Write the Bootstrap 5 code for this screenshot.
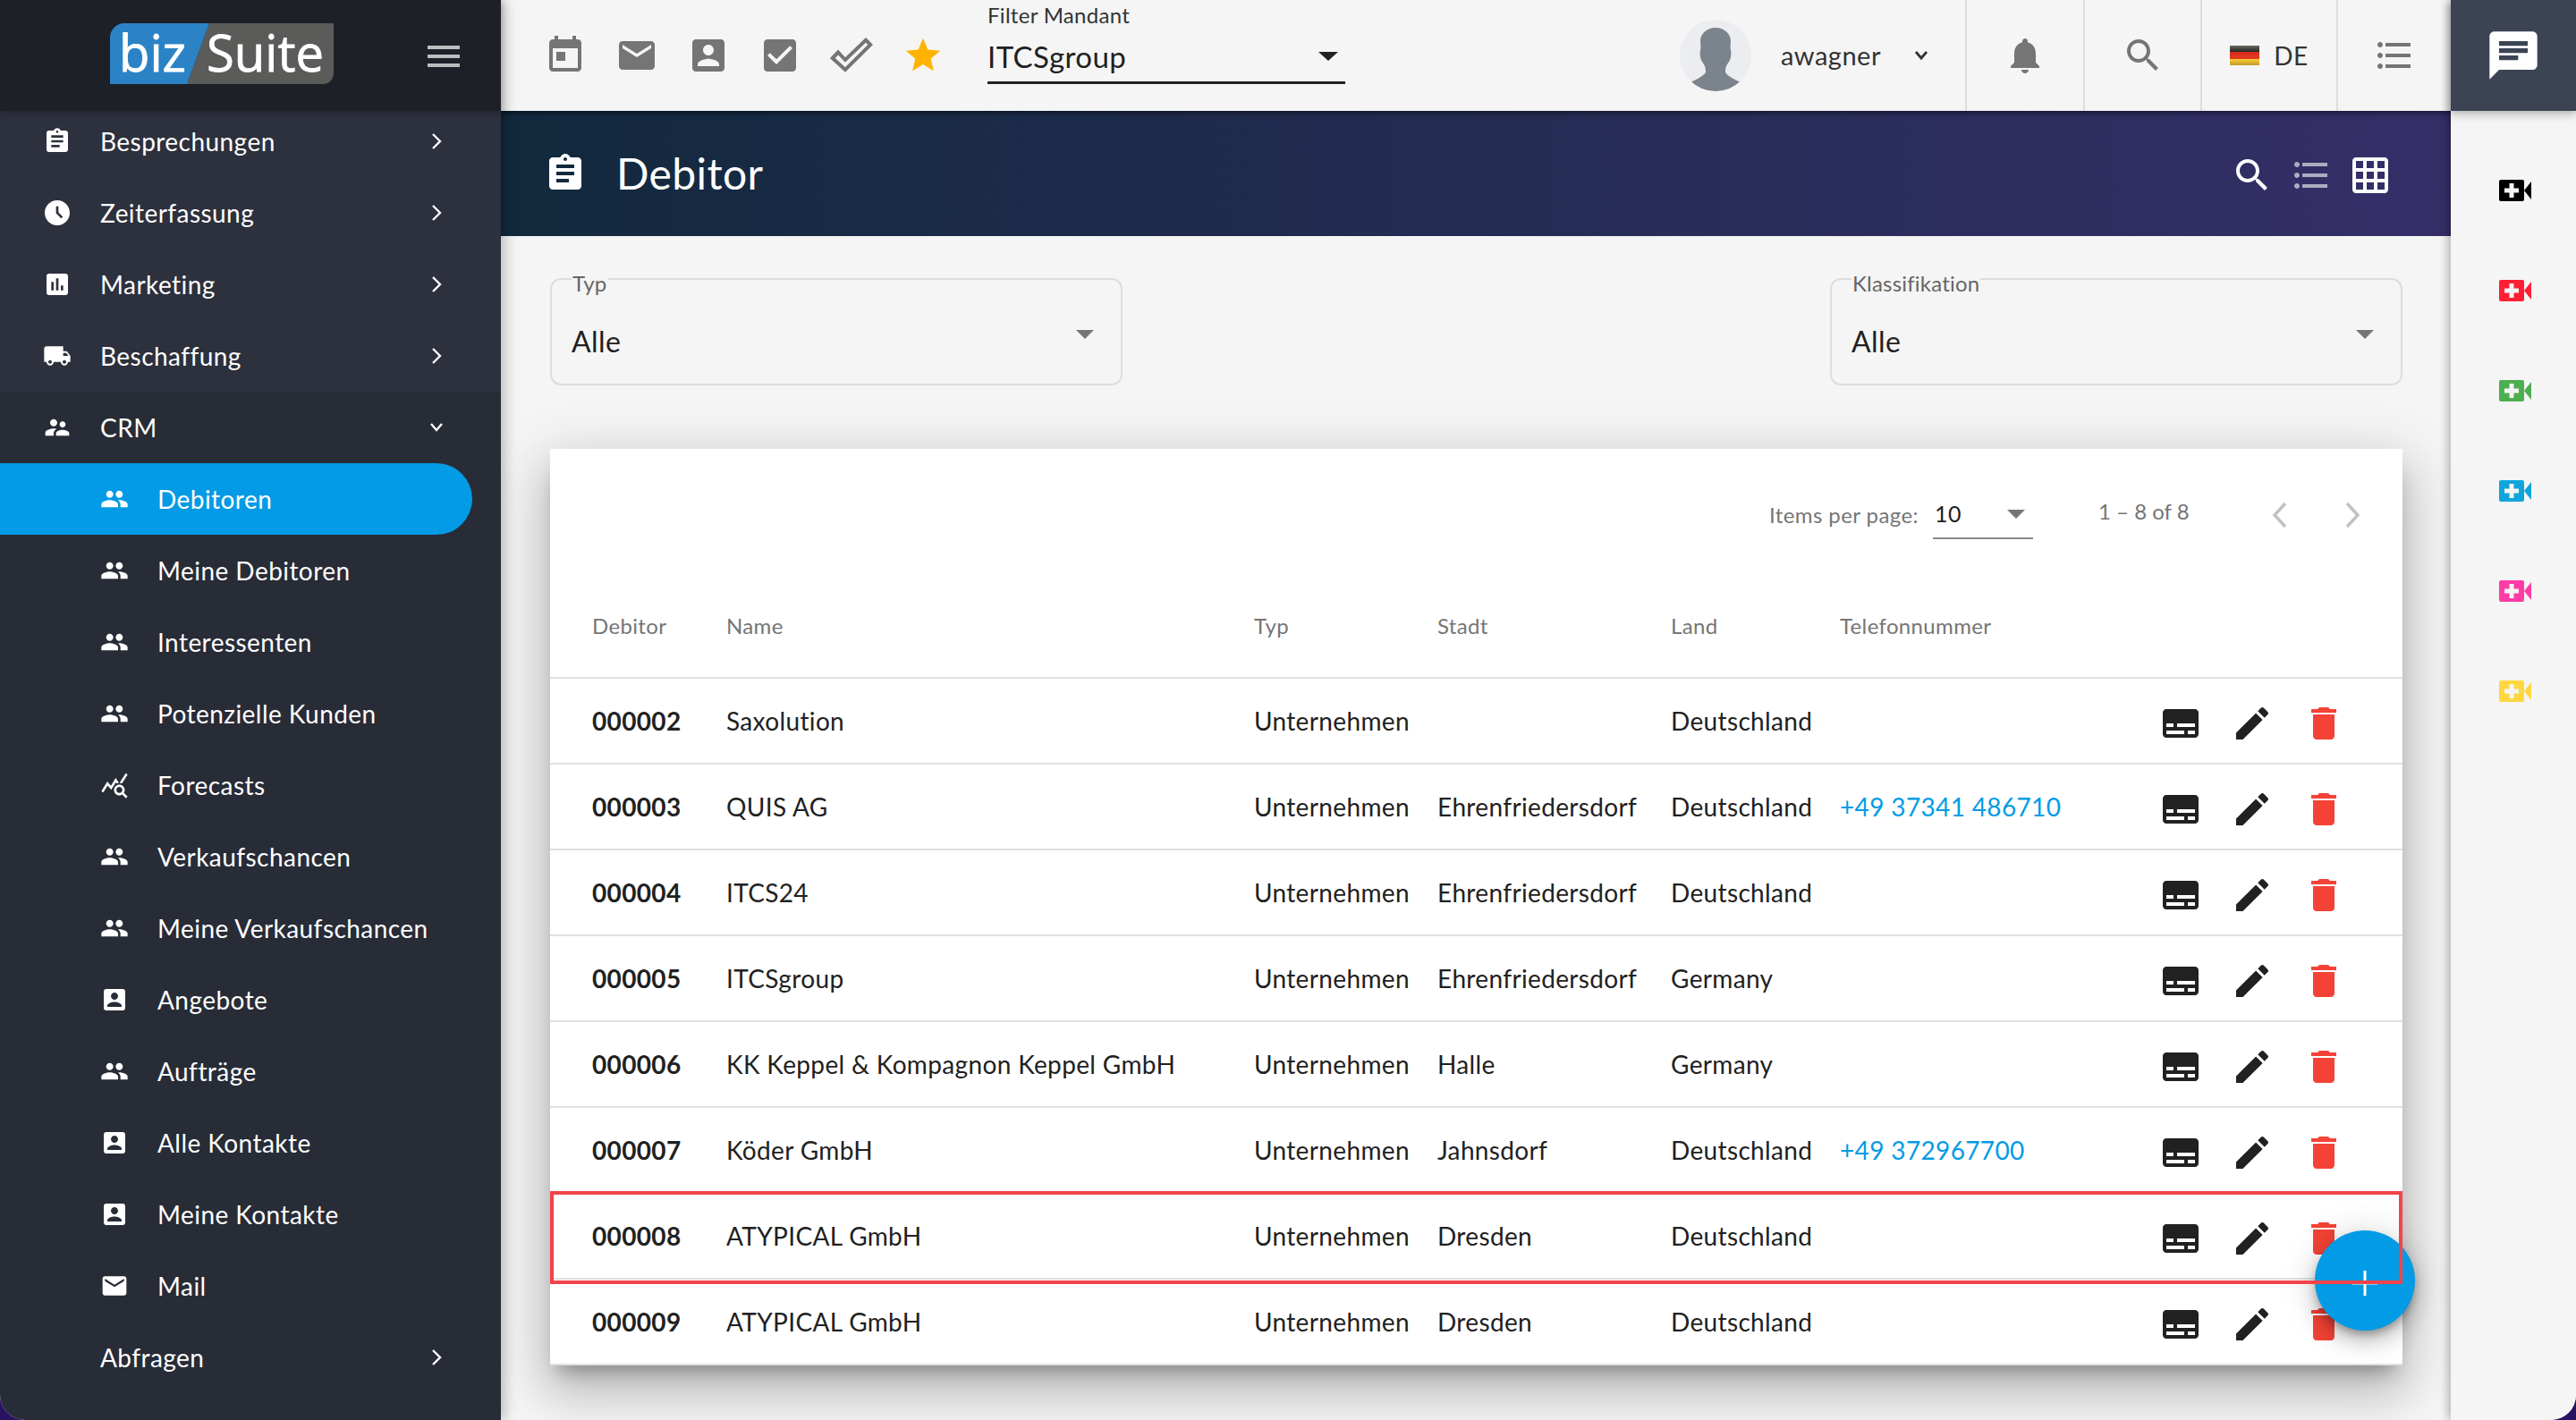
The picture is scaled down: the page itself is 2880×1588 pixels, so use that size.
<!DOCTYPE html>
<html lang="de">
<head>
<meta charset="utf-8">
<title>bizSuite Debitor</title>
<link href="https://cdn.jsdelivr.net/npm/bootstrap@5.3.0/dist/css/bootstrap.min.css" rel="stylesheet">
<style>
html,body{height:100%;margin:0}
body{background:#2a1263;font-family:"Lato","Liberation Sans",sans-serif;font-size:28px;color:#212121;letter-spacing:.45px;overflow:hidden}
svg{display:block;flex:none;fill:currentColor}
.sprite-defs{position:absolute}
.app-shell{width:2880px;height:1588px;background:#f5f5f5;border-radius:0 0 28px 28px;overflow:hidden;position:relative}
.side-bar{width:560px;background:#282c37;color:#fff;box-shadow:4px 0 14px rgba(0,0,0,.25);z-index:3}
.side-brand{height:124px;background:#1e2028;padding:26px 46px 0 123px;z-index:2;position:relative;box-shadow:0 2px 8px rgba(0,0,0,.25)}
.brand-logo{overflow:visible}
.brand-logo text{font-family:"Open Sans",sans-serif;font-size:57px;letter-spacing:0;fill:#fff;stroke:#fff;stroke-width:.8}
.side-burger{color:#bdbdbf;margin-top:25px}
.side-nav{margin-top:-6px;overflow:hidden;flex:1 1 0;min-height:0}
.top-group{background:#2d303d}
.nav-row{height:80px;padding-left:46px;padding-right:64px;flex:none}
.nav-row .ico{width:36px;display:flex;justify-content:center;margin-right:30px}
.nav-row .ico svg{width:32px;height:32px}
.nav-sub{padding-left:110px}
.nav-plain{padding-left:112px}
.nav-active{background:#039be5;border-radius:0 40px 40px 0;width:528px;padding-right:0}
.nav-chev{width:16px;height:24px;fill:none;stroke:#fff;stroke-width:2.4}
.main-col{min-width:0}
.top-strip{height:124px;background:#f5f5f5;color:#757575}
.top-tools{padding-left:32px}
.top-ico{width:48px;height:48px}
.tool-slot{width:80px;justify-content:center}
.star-ico{color:#ffb300}
.mandant{width:400px;margin-left:32px;height:124px}
.mandant-label{font-size:24px;line-height:34px;height:35px;color:#333;letter-spacing:.3px}
.mandant-value{font-size:33px;line-height:56px;height:59px;border-bottom:3px solid #222;color:#212121}
.tri-down{width:0;height:0;border-left:11px solid transparent;border-right:11px solid transparent;border-top:10px solid #222}
.avatar-pic{width:80px;height:80px;margin-left:374px;margin-right:33px}
.user-name{color:#333;width:117px;font-size:29px;letter-spacing:.5px}
.user-chev{stroke:#333;stroke-width:2.8;margin-left:32px}
.divider-l{border-left:2px solid #ddd;height:124px}
.slot-bell{width:132px}.slot-search{width:131px}.slot-lang{width:152px;color:#333}.slot-list{width:128px}
.flag-de{width:33px;height:22px;background:linear-gradient(#6a6a60,#222 33%,#d92a1c 33%,#e03a20 66%,#ffd030 66%,#c09a30)}
.head-band{height:140px;background:linear-gradient(90deg,#12293d,#352f69);box-shadow:inset 0 5px 6px -3px rgba(0,0,0,.55);color:#fff;padding:0 66px 0 48px}
.head-title{font-size:48px;font-weight:400;margin:0 0 0 33px;line-height:1;letter-spacing:.4px}
.head-tools{gap:18px;padding-top:4px}
.list-dim{opacity:.6}
.page-body{flex:1 1 0;padding:26px 54px 0 55px;background:#f5f5f5;position:relative;min-height:0}
.pick-box{width:640px;height:141px;border:2px solid #ddd;border-radius:12px;padding:0 22px;margin:0;min-width:0}
.pick-box legend{float:none;width:auto;font-size:24px;line-height:34px;color:#666;padding:10px 1px 0;margin:0;letter-spacing:.2px}
.pick-value{height:96px;font-size:32px;color:#212121;padding-right:8px}
.tri-soft{border-top-color:#757575;border-left-width:10px;border-right-width:10px}
.pick-value .tri-soft{margin-bottom:16px}
.data-card{margin-top:71px;height:1025px;background:#fff;position:relative;box-shadow:0 16px 20px -10px rgba(0,0,0,.3),0 32px 48px 4px rgba(0,0,0,.14),0 12px 60px 10px rgba(0,0,0,.12);border:0;border-radius:0}
.pager-bar{height:145px;color:#757575;font-size:24px;letter-spacing:.42px;padding:4px 47px 0 0}
.pager-size{width:112px;height:54px;margin:0 73px 0 16px;border-bottom:2px solid #8a8a8a;color:#212121;font-size:25px;padding:0 9px 0 2px}
.pager-range{width:150px;margin:-8px 44px 0 0;letter-spacing:0}
.pager-arrow{width:18px;height:30px;fill:none;stroke:#c2c2c2;stroke-width:3.5}
.pager-prev{margin-right:63px}
.grid-tbl{table-layout:fixed;width:100%;margin:0;--bs-table-border-color:#e0e0e0;--bs-table-color:#212121;letter-spacing:.35px}
.grid-tbl>tbody>tr>*,.grid-tbl>thead>tr>*{padding:0;vertical-align:middle;border-bottom:2px solid #e0e0e0;white-space:nowrap}
.grid-tbl thead th{height:112px;font-size:24px;font-weight:400;color:#757575;letter-spacing:.35px;padding-bottom:4px}
.grid-tbl tbody td{height:96px;font-size:28px}
.grid-tbl td.first-cell,.grid-tbl th.first-cell{padding-left:47px}
.grid-tbl a{color:#039be5;text-decoration:none}
.c1{width:197px}.c2{width:590px}.c3{width:205px}.c4{width:261px}.c5{width:189px}.c6{width:357px}
.row-tools{gap:32px;padding:6px 0 0 0;color:#212121}
.row-tools .tool-del{color:#f44336}
.mark-frame{position:absolute;left:0;right:0;top:830px;height:104px;border:4px solid #f2444a;pointer-events:none;z-index:5}
.fab-add{position:absolute;left:1973px;top:874px;width:112px;height:112px;border:0;border-radius:50%;background:#039be5;color:#fff;padding:0;z-index:4;box-shadow:0 6px 10px -2px rgba(0,0,0,.3),0 12px 20px 2px rgba(0,0,0,.14),0 4px 36px 6px rgba(0,0,0,.12)}
.fab-add svg{margin-top:6px}
.side-dock{width:140px;background:#f5f5f5;box-shadow:-3px 0 10px rgba(0,0,0,.28);z-index:3}
.dock-chat{height:124px;background:#3c4454;color:#fff;box-shadow:0 3px 10px rgba(0,0,0,.3)}
.dock-cams{padding-top:33px}
.cam-slot{height:112px;padding-left:54px}
.cam-black{color:#000}.cam-red{color:#ff1f35}.cam-green{color:#4caf50}.cam-blue{color:#0fa5dc}.cam-pink{color:#ff3ba5}.cam-yellow{color:#ffd740}
</style>
</head>
<body>
<svg width="0" height="0" class="sprite-defs">
<defs>
<symbol id="i-assign" viewBox="0 0 24 24"><path d="M19 3h-4.180C14.400 1.840 13.300 1 12 1c-1.300 0-2.400.84-2.820 2H5c-1.100 0-2 .9-2 2v14c0 1.100.9 2 2 2h14c1.100 0 2-.9 2-2V5c0-1.100-.9-2-2-2zm-7 0c.55 0 1 .45 1 1s-.45 1-1 1-1-.45-1-1 .45-1 1-1zm2 14H7v-2h7v2zm3-4H7v-2h10v2zm0-4H7V7h10v2z"/></symbol>
<symbol id="i-clock" viewBox="0 0 24 24"><path fill-rule="evenodd" d="M11.990 1.500C6.200 1.500 1.500 6.200 1.500 12s4.700 10.500 10.490 10.500C17.800 22.500 22.500 17.800 22.500 12S17.800 1.500 11.990 1.500zm3.300 15.210L11 12.410V6.500h2v5.090l3.710 3.710-1.420 1.410z"/></symbol>
<symbol id="i-chart" viewBox="0 0 24 24"><path d="M19 3H5c-1.100 0-2 .9-2 2v14c0 1.100.9 2 2 2h14c1.100 0 2-.9 2-2V5c0-1.100-.9-2-2-2zM9 17H7v-7h2v7zm4 0h-2V7h2v10zm4 0h-2v-4h2v4z"/></symbol>
<symbol id="i-truck" viewBox="0 0 24 24"><path d="M20 8h-3V4H3c-1.100 0-2 .9-2 2v11h2c0 1.660 1.340 3 3 3s3-1.340 3-3h6c0 1.660 1.340 3 3 3s3-1.340 3-3h2v-5l-3-4zM6 18.500c-.83 0-1.500-.67-1.500-1.500s.67-1.500 1.500-1.500 1.500.67 1.500 1.500-.67 1.500-1.500 1.500zm13.500-9l1.960 2.500H17V9.500h2.500zm-1.500 9c-.83 0-1.500-.67-1.500-1.500s.67-1.500 1.500-1.500 1.500.67 1.500 1.500-.67 1.500-1.500 1.500z"/></symbol>
<symbol id="i-super" viewBox="0 0 24 24"><path d="M16.500 12c1.380 0 2.490-1.120 2.490-2.500S17.880 7 16.500 7C15.120 7 14 8.120 14 9.500s1.120 2.500 2.500 2.500zM9 11c1.660 0 2.990-1.340 2.990-3S10.660 5 9 5C7.340 5 6 6.340 6 8s1.340 3 3 3zm7.500 3c-1.830 0-5.500.92-5.500 2.750V19h11v-2.250c0-1.830-3.670-2.750-5.500-2.750zM9 13c-2.330 0-7 1.170-7 3.500V19h7v-2.250c0-.85.33-2.340 2.370-3.470C10.500 13.100 9.660 13 9 13z"/></symbol>
<symbol id="i-people" viewBox="0 0 24 24"><path d="M16 11c1.660 0 2.990-1.340 2.990-3S17.660 5 16 5c-1.660 0-3 1.340-3 3s1.340 3 3 3zm-8 0c1.660 0 2.990-1.340 2.990-3S9.660 5 8 5C6.340 5 5 6.340 5 8s1.340 3 3 3zm0 2c-2.330 0-7 1.170-7 3.500V19h14v-2.500c0-2.330-4.670-3.500-7-3.500zm8 0c-.29 0-.62.02-.97.05 1.160.84 1.970 1.970 1.970 3.450V19h6v-2.500c0-2.330-4.670-3.500-7-3.500z"/></symbol>
<symbol id="i-stats" viewBox="0 0 24 24"><path d="M19.880 18.470c.44-.7.7-1.510.7-2.390 0-2.490-2.010-4.500-4.500-4.500s-4.500 2.010-4.500 4.500 2.010 4.500 4.490 4.500c.88 0 1.700-.26 2.390-.7L21.580 23 23 21.580l-3.120-3.110zm-3.800.11c-1.380 0-2.500-1.120-2.500-2.500s1.120-2.500 2.500-2.500 2.500 1.120 2.500 2.500-1.120 2.500-2.500 2.500zm-.36-8.500c-.74.02-1.450.18-2.100.45l-.55-.83-3.800 6.180-3.010-3.520-3.630 5.810L1 17l5-8 3 3.500L13 6l2.720 4.080zm2.590.5c-.64-.28-1.330-.45-2.050-.49L21.380 2 23 3.180l-4.690 7.400z"/></symbol>
<symbol id="i-contact" viewBox="0 0 24 24"><path d="M3 5v14c0 1.100.89 2 2 2h14c1.100 0 2-.9 2-2V5c0-1.100-.9-2-2-2H5c-1.110 0-2 .9-2 2zm12 4c0 1.660-1.340 3-3 3s-3-1.340-3-3 1.340-3 3-3 3 1.340 3 3zm-9 8c0-2 4-3.100 6-3.100s6 1.100 6 3.100v1H6v-1z"/></symbol>
<symbol id="i-mail" viewBox="0 0 24 24"><path d="M20 4H4c-1.100 0-1.990.9-1.990 2L2 18c0 1.100.9 2 2 2h16c1.100 0 2-.9 2-2V6c0-1.100-.9-2-2-2zm0 4l-8 5-8-5V6l8 5 8-5v2z"/></symbol>
<symbol id="i-search" viewBox="0 0 24 24"><path d="M15.500 14h-.79l-.28-.27C15.410 12.590 16 11.110 16 9.500 16 5.910 13.090 3 9.500 3S3 5.910 3 9.500 5.910 16 9.500 16c1.610 0 3.090-.59 4.230-1.570l.27.28v.79l5 4.990L20.490 19l-4.990-5zm-6 0C7.010 14 5 11.990 5 9.500S7.010 5 9.500 5 14 7.010 14 9.500 11.990 14 9.500 14z"/></symbol>
<symbol id="i-list" viewBox="0 0 24 24"><path d="M4 10.500c-.83 0-1.500.67-1.500 1.500s.67 1.500 1.500 1.500 1.500-.67 1.500-1.500-.67-1.500-1.500-1.500zm0-6c-.83 0-1.500.67-1.500 1.500S3.170 7.500 4 7.500 5.500 6.830 5.500 6 4.830 4.500 4 4.500zm0 12c-.83 0-1.500.68-1.500 1.500s.68 1.500 1.500 1.500 1.500-.68 1.500-1.500-.67-1.500-1.500-1.500zM7 19h14v-2H7v2zm0-6h14v-2H7v2zm0-8v2h14V5H7z"/></symbol>
<symbol id="i-subs" viewBox="0 0 24 24"><path d="M20 4H4c-1.100 0-2 .9-2 2v12c0 1.100.9 2 2 2h16c1.100 0 2-.9 2-2V6c0-1.100-.9-2-2-2zM4 12h4v2H4v-2zm10 6H4v-2h10v2zm6 0h-4v-2h4v2zm0-4H10v-2h10v2z"/></symbol>
<symbol id="i-edit" viewBox="0 0 24 24"><path d="M3 17.250V21h3.750L17.810 9.940l-3.750-3.750L3 17.250zM20.710 7.040c.39-.39.39-1.020 0-1.410l-2.340-2.340c-.39-.39-1.020-.39-1.410 0l-1.830 1.830 3.750 3.750 1.830-1.830z"/></symbol>
<symbol id="i-del" viewBox="0 0 24 24"><path d="M6 19c0 1.100.9 2 2 2h8c1.100 0 2-.9 2-2V7H6v12zM19 4h-3.500l-1-1h-5l-1 1H5v2h14V4z"/></symbol>
<symbol id="i-cam" viewBox="0 0 36 24"><path fill-rule="evenodd" d="M2 0h24a2 2 0 0 1 2 2v20a2 2 0 0 1-2 2H2a2 2 0 0 1-2-2V2a2 2 0 0 1 2-2zm9.500 4v5.500H6v5h5.500V20h5v-5.500H22v-5h-5.500V4h-5zM28 12l8-10v20z"/></symbol>
<symbol id="i-right" viewBox="0 0 16 24"><path d="M4 4l8 8-8 8"/></symbol>
<symbol id="i-down" viewBox="0 0 16 24"><path d="M2 8l6 7 6-7"/></symbol>
</defs>
</svg>

<div class="app-shell d-flex">
  <aside class="side-bar d-flex flex-column flex-shrink-0">
    <div class="side-brand d-flex justify-content-between flex-shrink-0">
      <svg class="brand-logo" width="250" height="68" viewBox="0 0 250 68">
        <path d="M111 0H250v56a12 12 0 0 1-12 12H86z" fill="#5b5b59"/>
        <path d="M16 0H111L86 68H0V16A16 16 0 0 1 16 0z" fill="#2b83c6"/>
        <text x="10" y="54" textLength="75" lengthAdjust="spacingAndGlyphs">biz</text>
        <text x="108" y="54" textLength="131" lengthAdjust="spacingAndGlyphs">Suite</text>
      </svg>
      <svg class="side-burger" width="36" height="24" viewBox="0 0 36 24"><path d="M0 0h36v4H0zM0 10h36v4H0zM0 20h36v4H0z"/></svg>
    </div>
    <nav class="side-nav d-flex flex-column">
      <div class="top-group">
        <div class="nav-row d-flex align-items-center"><span class="ico"><svg><use href="#i-assign"/></svg></span><span class="flex-grow-1">Besprechungen</span><svg class="nav-chev"><use href="#i-right"/></svg></div>
        <div class="nav-row d-flex align-items-center"><span class="ico"><svg><use href="#i-clock"/></svg></span><span class="flex-grow-1">Zeiterfassung</span><svg class="nav-chev"><use href="#i-right"/></svg></div>
        <div class="nav-row d-flex align-items-center"><span class="ico"><svg><use href="#i-chart"/></svg></span><span class="flex-grow-1">Marketing</span><svg class="nav-chev"><use href="#i-right"/></svg></div>
        <div class="nav-row d-flex align-items-center"><span class="ico"><svg><use href="#i-truck"/></svg></span><span class="flex-grow-1">Beschaffung</span><svg class="nav-chev"><use href="#i-right"/></svg></div>
      </div>
      <div class="nav-row d-flex align-items-center"><span class="ico"><svg><use href="#i-super"/></svg></span><span class="flex-grow-1">CRM</span><svg class="nav-chev"><use href="#i-down"/></svg></div>
      <div class="nav-row nav-sub nav-active d-flex align-items-center"><span class="ico"><svg><use href="#i-people"/></svg></span><span>Debitoren</span></div>
      <div class="nav-row nav-sub d-flex align-items-center"><span class="ico"><svg><use href="#i-people"/></svg></span><span>Meine Debitoren</span></div>
      <div class="nav-row nav-sub d-flex align-items-center"><span class="ico"><svg><use href="#i-people"/></svg></span><span>Interessenten</span></div>
      <div class="nav-row nav-sub d-flex align-items-center"><span class="ico"><svg><use href="#i-people"/></svg></span><span>Potenzielle Kunden</span></div>
      <div class="nav-row nav-sub d-flex align-items-center"><span class="ico"><svg><use href="#i-stats"/></svg></span><span>Forecasts</span></div>
      <div class="nav-row nav-sub d-flex align-items-center"><span class="ico"><svg><use href="#i-people"/></svg></span><span>Verkaufschancen</span></div>
      <div class="nav-row nav-sub d-flex align-items-center"><span class="ico"><svg><use href="#i-people"/></svg></span><span>Meine Verkaufschancen</span></div>
      <div class="nav-row nav-sub d-flex align-items-center"><span class="ico"><svg><use href="#i-contact"/></svg></span><span>Angebote</span></div>
      <div class="nav-row nav-sub d-flex align-items-center"><span class="ico"><svg><use href="#i-people"/></svg></span><span>Aufträge</span></div>
      <div class="nav-row nav-sub d-flex align-items-center"><span class="ico"><svg><use href="#i-contact"/></svg></span><span>Alle Kontakte</span></div>
      <div class="nav-row nav-sub d-flex align-items-center"><span class="ico"><svg><use href="#i-contact"/></svg></span><span>Meine Kontakte</span></div>
      <div class="nav-row nav-sub d-flex align-items-center"><span class="ico"><svg><use href="#i-mail"/></svg></span><span>Mail</span></div>
      <div class="nav-row nav-plain d-flex align-items-center"><span class="flex-grow-1">Abfragen</span><svg class="nav-chev"><use href="#i-right"/></svg></div>
      <div class="nav-row nav-plain d-flex align-items-center"><span class="flex-grow-1">Berichte</span></div>
    </nav>
  </aside>

  <div class="main-col d-flex flex-column flex-grow-1">
    <header class="top-strip d-flex align-items-center flex-shrink-0">
      <div class="top-tools d-flex align-items-center">
        <span class="tool-slot d-flex"><svg class="top-ico" viewBox="0 0 24 24"><path d="M12 10H7v5h5v-5zM16 1v2H8V1H6v2H5c-1.110 0-1.990.9-1.990 2L3 19c0 1.100.89 2 2 2h14c1.100 0 2-.9 2-2V5c0-1.100-.9-2-2-2h-1V1h-2zm3 18H5V8h14v11z"/></svg></span>
        <span class="tool-slot d-flex"><svg class="top-ico"><use href="#i-mail"/></svg></span>
        <span class="tool-slot d-flex"><svg class="top-ico"><use href="#i-contact"/></svg></span>
        <span class="tool-slot d-flex"><svg class="top-ico" viewBox="0 0 24 24"><path d="M19 3H5c-1.110 0-2 .9-2 2v14c0 1.100.89 2 2 2h14c1.110 0 2-.9 2-2V5c0-1.100-.89-2-2-2zm-9 14l-5-5 1.410-1.410L10 14.170l7.590-7.590L19 8l-9 9z"/></svg></span>
        <span class="tool-slot d-flex"><svg width="48" height="40" viewBox="0 0 48 40"><path d="M2.800 23L9 16.500l8 8.500L40 2.800 45.200 8 17 36z" fill="none" stroke="currentColor" stroke-width="4"/></svg></span>
        <span class="tool-slot d-flex"><svg class="star-ico" width="46" height="46" viewBox="0 0 24 24"><path d="M12 17.270L18.180 21l-1.640-7.030L22 9.240l-7.190-.61L12 2 9.190 8.630 2 9.240l5.460 4.730L5.820 21z"/></svg></span>
      </div>
      <div class="mandant d-flex flex-column flex-shrink-0">
        <div class="mandant-label">Filter Mandant</div>
        <div class="mandant-value d-flex align-items-center justify-content-between pe-2"><span>ITCSgroup</span><span class="tri-down"></span></div>
      </div>
      <svg class="avatar-pic" viewBox="0 0 80 80">
        <defs><clipPath id="av"><circle cx="40" cy="40" r="40"/></clipPath></defs>
        <g clip-path="url(#av)"><rect width="80" height="80" fill="#ebedf0"/>
        <path fill="#7b838c" d="M40 9c-10 0-17 7-17 15 0 4 1 7 0 10-1 5 0 10 2 13 2 3 4 5 4 11 0 3-6 7-17 12l-3 10h62l-3-10c-11-5-17-9-17-12 0-6 2-8 4-11 2-3 3-8 2-13-1-3 0-6 0-10 0-8-7-15-17-15z"/></g>
      </svg>
      <span class="user-name">awagner</span>
      <svg class="nav-chev user-chev"><use href="#i-down"/></svg>
      <div class="d-flex align-items-center ms-auto">
        <div class="divider-l slot-bell d-flex align-items-center justify-content-center"><svg class="top-ico" viewBox="0 0 24 24"><path d="M12 22c1.100 0 2-.9 2-2h-4c0 1.100.89 2 2 2zm6-6v-5c0-3.070-1.640-5.640-4.500-6.320V4c0-.83-.67-1.500-1.500-1.500s-1.500.67-1.500 1.500v.68C7.630 5.360 6 7.920 6 11v5l-2 2v1h16v-1l-2-2z"/></svg></div>
        <div class="divider-l slot-search d-flex align-items-center justify-content-center"><svg class="top-ico"><use href="#i-search"/></svg></div>
        <div class="divider-l slot-lang d-flex align-items-center justify-content-center gap-3"><span class="flag-de"></span><span>DE</span></div>
        <div class="divider-l slot-list d-flex align-items-center justify-content-center"><svg class="top-ico"><use href="#i-list"/></svg></div>
      </div>
    </header>

    <div class="head-band d-flex align-items-center flex-shrink-0">
      <svg class="top-ico"><use href="#i-assign"/></svg>
      <h1 class="head-title flex-grow-1">Debitor</h1>
      <div class="head-tools d-flex align-items-center">
        <svg class="top-ico"><use href="#i-search"/></svg>
        <svg class="top-ico list-dim"><use href="#i-list"/></svg>
        <svg class="top-ico" viewBox="0 0 24 24"><path d="M20 2H4c-1.100 0-2 .9-2 2v16c0 1.100.9 2 2 2h16c1.100 0 2-.9 2-2V4c0-1.100-.9-2-2-2zM8 20H4v-4h4v4zm0-6H4v-4h4v4zm0-6H4V4h4v4zm6 12h-4v-4h4v4zm0-6h-4v-4h4v4zm0-6h-4V4h4v4zm6 12h-4v-4h4v4zm0-6h-4v-4h4v4zm0-6h-4V4h4v4z"/></svg>
      </div>
    </div>

    <main class="page-body">
      <div class="d-flex justify-content-between">
        <fieldset class="pick-box"><legend>Typ</legend><div class="pick-value d-flex align-items-center justify-content-between"><span>Alle</span><span class="tri-down tri-soft"></span></div></fieldset>
        <fieldset class="pick-box"><legend>Klassifikation</legend><div class="pick-value d-flex align-items-center justify-content-between"><span>Alle</span><span class="tri-down tri-soft"></span></div></fieldset>
      </div>

      <section class="card data-card">
        <div class="pager-bar d-flex align-items-center justify-content-end">
          <span>Items per page:</span>
          <span class="pager-size d-flex align-items-center justify-content-between"><span>10</span><span class="tri-down tri-soft"></span></span>
          <span class="pager-range">1 – 8 of 8</span>
          <svg class="pager-arrow pager-prev" viewBox="0 0 18 30"><path d="M15 2L3 15l12 13"/></svg>
          <svg class="pager-arrow" viewBox="0 0 18 30"><path d="M3 2l12 13L3 28"/></svg>
        </div>
        <table class="table grid-tbl">
          <colgroup><col class="c1"><col class="c2"><col class="c3"><col class="c4"><col class="c5"><col class="c6"><col></colgroup>
          <thead><tr><th class="first-cell">Debitor</th><th>Name</th><th>Typ</th><th>Stadt</th><th>Land</th><th>Telefonnummer</th><th></th></tr></thead>
          <tbody>
            <tr><td class="first-cell fw-bold">000002</td><td>Saxolution</td><td>Unternehmen</td><td></td><td>Deutschland</td><td></td><td><div class="row-tools d-flex"><svg class="top-ico"><use href="#i-subs"/></svg><svg class="top-ico"><use href="#i-edit"/></svg><svg class="top-ico tool-del"><use href="#i-del"/></svg></div></td></tr>
            <tr><td class="first-cell fw-bold">000003</td><td>QUIS AG</td><td>Unternehmen</td><td>Ehrenfriedersdorf</td><td>Deutschland</td><td><a href="#">+49 37341 486710</a></td><td><div class="row-tools d-flex"><svg class="top-ico"><use href="#i-subs"/></svg><svg class="top-ico"><use href="#i-edit"/></svg><svg class="top-ico tool-del"><use href="#i-del"/></svg></div></td></tr>
            <tr><td class="first-cell fw-bold">000004</td><td>ITCS24</td><td>Unternehmen</td><td>Ehrenfriedersdorf</td><td>Deutschland</td><td></td><td><div class="row-tools d-flex"><svg class="top-ico"><use href="#i-subs"/></svg><svg class="top-ico"><use href="#i-edit"/></svg><svg class="top-ico tool-del"><use href="#i-del"/></svg></div></td></tr>
            <tr><td class="first-cell fw-bold">000005</td><td>ITCSgroup</td><td>Unternehmen</td><td>Ehrenfriedersdorf</td><td>Germany</td><td></td><td><div class="row-tools d-flex"><svg class="top-ico"><use href="#i-subs"/></svg><svg class="top-ico"><use href="#i-edit"/></svg><svg class="top-ico tool-del"><use href="#i-del"/></svg></div></td></tr>
            <tr><td class="first-cell fw-bold">000006</td><td>KK Keppel &amp; Kompagnon Keppel GmbH</td><td>Unternehmen</td><td>Halle</td><td>Germany</td><td></td><td><div class="row-tools d-flex"><svg class="top-ico"><use href="#i-subs"/></svg><svg class="top-ico"><use href="#i-edit"/></svg><svg class="top-ico tool-del"><use href="#i-del"/></svg></div></td></tr>
            <tr><td class="first-cell fw-bold">000007</td><td>Köder GmbH</td><td>Unternehmen</td><td>Jahnsdorf</td><td>Deutschland</td><td><a href="#">+49 372967700</a></td><td><div class="row-tools d-flex"><svg class="top-ico"><use href="#i-subs"/></svg><svg class="top-ico"><use href="#i-edit"/></svg><svg class="top-ico tool-del"><use href="#i-del"/></svg></div></td></tr>
            <tr><td class="first-cell fw-bold">000008</td><td>ATYPICAL GmbH</td><td>Unternehmen</td><td>Dresden</td><td>Deutschland</td><td></td><td><div class="row-tools d-flex"><svg class="top-ico"><use href="#i-subs"/></svg><svg class="top-ico"><use href="#i-edit"/></svg><svg class="top-ico tool-del"><use href="#i-del"/></svg></div></td></tr>
            <tr><td class="first-cell fw-bold">000009</td><td>ATYPICAL GmbH</td><td>Unternehmen</td><td>Dresden</td><td>Deutschland</td><td></td><td><div class="row-tools d-flex"><svg class="top-ico"><use href="#i-subs"/></svg><svg class="top-ico"><use href="#i-edit"/></svg><svg class="top-ico tool-del"><use href="#i-del"/></svg></div></td></tr>
          </tbody>
        </table>
        <div class="mark-frame"></div>
        <button class="fab-add d-flex align-items-center justify-content-center" aria-label="Neu"><svg width="28" height="28" viewBox="0 0 28 28"><path d="M12.500 0h3v12.500H28v3H15.500V28h-3V15.500H0v-3h12.500z"/></svg></button>
      </section>
    </main>
  </div>

  <aside class="side-dock d-flex flex-column flex-shrink-0">
    <div class="dock-chat d-flex align-items-center justify-content-center"><svg width="64" height="64" viewBox="0 0 24 24"><path d="M20 2H4c-1.100 0-1.990.9-1.990 2L2 22l4-4h14c1.100 0 2-.9 2-2V4c0-1.100-.9-2-2-2zM6 9h12v2H6V9zm8 5H6v-2h8v2zm4-6H6V6h12v2z"/></svg></div>
    <div class="dock-cams d-flex flex-column">
      <div class="cam-slot d-flex align-items-center cam-black"><svg width="36" height="24"><use href="#i-cam"/></svg></div>
      <div class="cam-slot d-flex align-items-center cam-red"><svg width="36" height="24"><use href="#i-cam"/></svg></div>
      <div class="cam-slot d-flex align-items-center cam-green"><svg width="36" height="24"><use href="#i-cam"/></svg></div>
      <div class="cam-slot d-flex align-items-center cam-blue"><svg width="36" height="24"><use href="#i-cam"/></svg></div>
      <div class="cam-slot d-flex align-items-center cam-pink"><svg width="36" height="24"><use href="#i-cam"/></svg></div>
      <div class="cam-slot d-flex align-items-center cam-yellow"><svg width="36" height="24"><use href="#i-cam"/></svg></div>
    </div>
  </aside>
</div>
<script src="https://cdn.jsdelivr.net/npm/bootstrap@5.3.0/dist/js/bootstrap.bundle.min.js"></script>
</body>
</html>
